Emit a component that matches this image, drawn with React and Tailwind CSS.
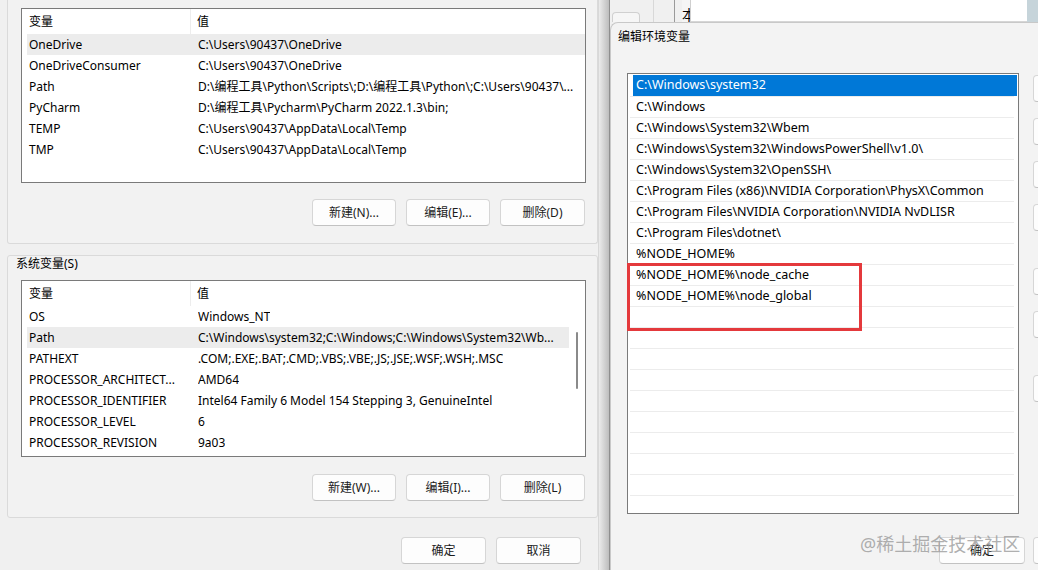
import React from "react";

const userVars = [
  ["OneDrive", "C:\\Users\\90437\\OneDrive", true],
  ["OneDriveConsumer", "C:\\Users\\90437\\OneDrive"],
  ["Path", "D:\\编程工具\\Python\\Scripts\\;D:\\编程工具\\Python\\;C:\\Users\\90437\\..."],
  ["PyCharm", "D:\\编程工具\\Pycharm\\PyCharm 2022.1.3\\bin;"],
  ["TEMP", "C:\\Users\\90437\\AppData\\Local\\Temp"],
  ["TMP", "C:\\Users\\90437\\AppData\\Local\\Temp"],
];

const sysVars = [
  ["OS", "Windows_NT"],
  ["Path", "C:\\Windows\\system32;C:\\Windows;C:\\Windows\\System32\\Wb...", true],
  ["PATHEXT", ".COM;.EXE;.BAT;.CMD;.VBS;.VBE;.JS;.JSE;.WSF;.WSH;.MSC"],
  ["PROCESSOR_ARCHITECT...", "AMD64"],
  ["PROCESSOR_IDENTIFIER", "Intel64 Family 6 Model 154 Stepping 3, GenuineIntel"],
  ["PROCESSOR_LEVEL", "6"],
  ["PROCESSOR_REVISION", "9a03"],
];

const pathItems = [
  "C:\\Windows\\system32",
  "C:\\Windows",
  "C:\\Windows\\System32\\Wbem",
  "C:\\Windows\\System32\\WindowsPowerShell\\v1.0\\",
  "C:\\Windows\\System32\\OpenSSH\\",
  "C:\\Program Files (x86)\\NVIDIA Corporation\\PhysX\\Common",
  "C:\\Program Files\\NVIDIA Corporation\\NVIDIA NvDLISR",
  "C:\\Program Files\\dotnet\\",
  "%NODE_HOME%",
  "%NODE_HOME%\\node_cache",
  "%NODE_HOME%\\node_global",
];

function Btn({ children, className = "" }) {
  return (
    <div
      className={`h-[27px] flex items-center justify-center rounded-[4px] bg-[#fdfdfd] border border-[#d6d6d6] border-b-[#c2c2c2] text-[12px] text-[#1b1b1b] whitespace-nowrap ${className}`}
    >
      {children}
    </div>
  );
}

function VarList({ rows, scroll, className = "" }) {
  return (
    <div className={`relative bg-white border border-[#7a7a7a] overflow-hidden ${className}`}>
      <div className={`flex flex-col ${scroll ? "mr-[16px]" : ""}`}>
        {/* header */}
        <div className="flex h-[25px] items-center">
          <div className="w-[169px] pl-[7px] h-full flex items-center border-r border-[#ededed]">变量</div>
          <div className="pl-[6px]">值</div>
        </div>
        {rows.map(([name, value, hl]) => (
          <div
            key={name}
            className={`flex h-[21px] items-center ml-[5px] whitespace-nowrap overflow-hidden ${hl ? "bg-[#ececec]" : ""}`}
          >
            <div className="w-[171px] pl-[2px] shrink-0 overflow-hidden">{name}</div>
            <div className="overflow-hidden">{value}</div>
          </div>
        ))}
      </div>
      {scroll && (
        <div className="absolute right-[7px] top-[51px] w-[2px] h-[57px] bg-[#8a8a8a] rounded-full" />
      )}
    </div>
  );
}

export default function App() {
  return (
    <div
      className="relative w-[1038px] h-[570px] overflow-hidden flex bg-[#f0f0f0] text-[12px] text-black"
      style={{ fontFamily: '"Noto Sans", "Noto Sans CJK SC", sans-serif' }}
    >
      {/* 环境变量 window */}
      <div className="w-[598px] shrink-0 flex flex-col">
        <div className="ml-[7px] h-[244px] border-l border-r border-b border-[#dadada] rounded-b-[3px] bg-[#f2f2f2] flex flex-col pl-[13px] pr-[11px] pt-[8px]">
          <VarList rows={userVars} className="h-[175px]" />
          <div className="flex justify-end gap-[10px] mt-[16px] pr-px">
            <Btn className="w-[84px]">新建(N)...</Btn>
            <Btn className="w-[84px]">编辑(E)...</Btn>
            <Btn className="w-[85px]">删除(D)</Btn>
          </div>
        </div>

        <div className="ml-[7px] mt-[11px] h-[263px] border border-[#dadada] rounded-[3px] bg-[#f2f2f2] flex flex-col pl-[13px] pr-[11px]">
          <div className="-ml-[5px] h-[16px] leading-[16px]">系统变量(S)</div>
          <VarList rows={sysVars} scroll className="mt-[8px] h-[177px]" />
          <div className="flex justify-end gap-[10px] mt-[17px] pr-px">
            <Btn className="w-[84px]">新建(W)...</Btn>
            <Btn className="w-[84px]">编辑(I)...</Btn>
            <Btn className="w-[85px]">删除(L)</Btn>
          </div>
        </div>

        <div className="flex justify-end gap-[10px] mt-[19px] pr-[17px]">
          <Btn className="w-[85px]">确定</Btn>
          <Btn className="w-[85px]">取消</Btn>
        </div>
      </div>

      {/* shadow */}
      <div className="w-[12px] shrink-0 bg-gradient-to-r from-[#ebebeb] to-[#bdbdbd] border-l border-[#d8d8d8] border-r border-r-[#8e8e8e]" />

      {/* 编辑环境变量 dialog */}
      <div className="flex-1 flex flex-col min-w-0">
        <div className="h-[22px] shrink-0 flex">
          <div className="w-[72px] shrink-0 flex">
            <div className="w-[2px]" />
            <div className="w-[28px] mt-[12px] border-t border-l border-r border-[#d0d0d0] rounded-t-[4px] bg-[#f6f6f6]" />
            <div className="w-[14px] border-r border-[#d8d8d8]" />
            <div className="w-[21px] border-r border-[#9a9a9a]" />
          </div>
          <div className="w-[8px] shrink-0 overflow-hidden bg-[#f5f5f5] text-[14px] leading-[22px] pt-[4px]">本</div>
          <div className="flex-1 bg-white border-l border-[#cfcfcf] border-b border-b-[#d6d6d6]" />
          <div className="w-[11px] shrink-0 bg-[#c6d4da]" />
        </div>

        <div className="flex-1 bg-[#f3f3f3] rounded-tl-[8px] border-t border-l border-[#c8c8c8] flex flex-col">
          <div className="pl-[7px] pt-[6px] h-[16px] leading-[16px] box-content">编辑环境变量</div>
          <div className="flex mt-[28px] ml-[16px] gap-[14px]">
            <div className="w-[392px] h-[441px] shrink-0 bg-white border border-[#7a7a7a] pt-px pl-px pr-px overflow-hidden text-[12.5px]">
              {Array.from({ length: 21 }).map((_, i) => {
                const text = pathItems[i];
                const sel = i === 0;
                return (
                  <div
                    key={i}
                    className={`h-[21px] flex items-center whitespace-nowrap ${
                      sel ? "bg-[#0078d7] text-white ml-[4px]" : "border-t border-[#ececec] ml-[1px] mr-[3px]"
                    }`}
                  >
                    <span className={sel ? "pl-[3px]" : "pl-[6px]"}>{text}</span>
                  </div>
                );
              })}
            </div>
            <div className="w-[120px] shrink-0 flex flex-col pt-[2px]">
              <Btn className="w-[120px] h-[26px]">新建(N)</Btn>
              <Btn className="w-[120px] h-[26px] mt-[16px]">编辑(E)</Btn>
              <Btn className="w-[120px] h-[26px] mt-[16px]">浏览(B)...</Btn>
              <Btn className="w-[120px] h-[26px] mt-[16px]">删除(D)</Btn>
              <Btn className="w-[120px] h-[26px] mt-[37px]">上移(U)</Btn>
              <Btn className="w-[120px] h-[26px] mt-[16px]">下移(O)</Btn>
              <Btn className="w-[120px] h-[26px] mt-[37px]">编辑文本(T)...</Btn>
            </div>
          </div>
          <div className="flex gap-[8px] pl-[328px] mt-[23px]">
            <Btn className="w-[86px] shrink-0 border-[#0067c0] border-b-[#0067c0]">确定</Btn>
            <Btn className="w-[120px] shrink-0">取消</Btn>
          </div>
        </div>
      </div>

      {/* annotation + watermark overlays */}
      <div className="absolute left-[627px] top-[263px] w-[235px] h-[68px] border-[3px] border-[#e4393c]" />
      <div className="absolute left-[860px] top-[532px] text-[18px] leading-[24px] text-[#9a9a9a]/80 whitespace-nowrap pointer-events-none">
        @稀土掘金技术社区
      </div>
    </div>
  );
}
